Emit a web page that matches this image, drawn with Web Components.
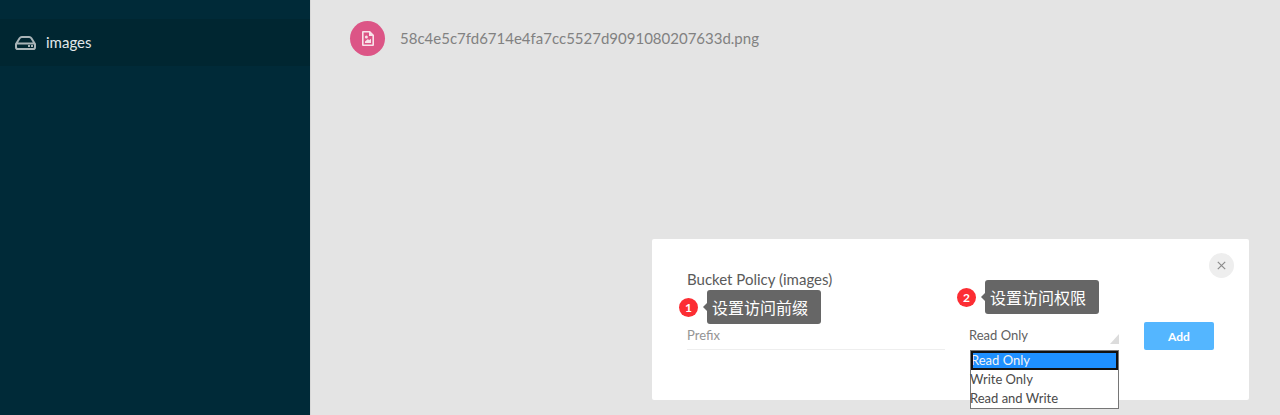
<!DOCTYPE html>
<html>
<head>
<meta charset="utf-8">
<title>Bucket Policy</title>
<style>
  html, body { margin: 0; height: 415px; overflow: hidden; }
  body { font-family: Lato, "Noto Sans CJK SC", sans-serif; }
  #app { display: flex; height: 415px; }
</style>
</head>
<body>
<div id="app">
  <side-bar>
    <bucket-item>images</bucket-item>
  </side-bar>
  <main-pane>
    <file-row>58c4e5c7fd6714e4fa7cc5527d9091080207633d.png</file-row>
    <policy-dialog slot="dialog" bucket="images"></policy-dialog>
  </main-pane>
</div>

<script>
function define(name, html) {
  customElements.define(name, class extends HTMLElement {
    constructor() {
      super();
      this.attachShadow({ mode: "open" }).innerHTML = html;
    }
  });
}

define("side-bar", `
  <style>
    :host { display: block; flex: 0 0 310px; background: #002a38; padding-top: 19px; box-sizing: border-box; }
  </style>
  <slot></slot>
`);

define("bucket-item", `
  <style>
    :host { display: flex; align-items: center; height: 47px; padding-left: 15px; gap: 10px; background: #002631;
      color: #e2e8ea; font: 400 15px Lato, sans-serif; }
    svg { display: block; }
    .label { margin-top: -2px; }
  </style>
  <svg width="21" height="14" viewBox="0 0 21 14" fill="none">
    <path d="M1 8 L4.6 2.2 Q5.4 1 6.8 1 H14.2 Q15.6 1 16.4 2.2 L20 8 V11.2 Q20 13 18.2 13 H2.8 Q1 13 1 11.2 Z M1.4 7.4 H19.6" stroke="#a9b4b8" stroke-width="2" stroke-linejoin="round"/>
    <rect x="13" y="9" width="2" height="2" fill="#a9b4b8"/>
    <rect x="16" y="9" width="2" height="2" fill="#a9b4b8"/>
  </svg>
  <span class="label"><slot></slot></span>
`);

define("main-pane", `
  <style>
    :host { display: flex; flex-direction: column; flex: 1; background: #e4e4e4; border-left: 1px solid #d8d8d8; box-sizing: border-box; }
    .list { flex: 1; padding: 21px 0 0 39px; }
    .foot { display: flex; justify-content: flex-end; padding: 0 31px 15px 0; }
  </style>
  <div class="list"><slot></slot></div>
  <div class="foot"><slot name="dialog"></slot></div>
`);

define("file-row", `
  <style>
    :host { display: flex; align-items: center; gap: 15px; color: #818181; font: 400 15px Lato, sans-serif; }
    .ico { width: 35px; height: 35px; border-radius: 50%; background: #dc5586; display: flex; align-items: center; justify-content: center; }
    .name { margin-top: -2px; }
    svg { display: block; }
  </style>
  <span class="ico">
    <svg width="12" height="15" viewBox="0 0 12 15">
      <path fill-rule="evenodd" fill="#f8e3ea" d="M1 0 H8 L12 4 V14 Q12 15 11 15 H1 Q0 15 0 14 V1 Q0 0 1 0 Z M1.6 1.6 V13.4 H10.4 V5 H7 V1.6 Z"/>
      <path fill="#f8e3ea" d="M3 12 V10.4 L6 8 L7 9.2 L9 7.8 V12 Z"/>
      <circle cx="4.4" cy="6" r="1.5" fill="#f8e3ea"/>
    </svg>
  </span>
  <span class="name"><slot></slot></span>
`);

define("hint-tip", `
  <style>
    :host { display: flex; align-items: center; position: absolute; color: #fff; font: 400 16px "Noto Sans CJK SC", sans-serif; }
    .num { width: 19px; height: 19px; border-radius: 50%; background: #fc2d33; font: 700 12px Lato, sans-serif; display: flex; align-items: center; justify-content: center; margin-right: 9px; }
    .box { position: relative; background: #666; border-radius: 3px; height: 34px; line-height: 34px; padding: 0 13px 0 5px; white-space: nowrap; }
    .box::before { content: ""; position: absolute; left: -4px; top: 13px; border: 4px solid transparent; border-left: 0; border-right-color: #666; }
  </style>
  <span class="num"><slot name="n"></slot></span>
  <span class="box"><slot></slot></span>
`);

define("policy-dialog", `
  <style>
    :host { display: block; position: relative; box-sizing: border-box; width: 597px; height: 161px; background: #fff; border-radius: 2px; padding: 32px 35px 0; color: #555; font: 400 14px Lato, sans-serif; }
    h4 { margin: 0; font: 400 15px/17px Lato, sans-serif; color: #5a5a5a; }
    .form { display: flex; align-items: flex-start; margin-top: 38px; }
    .prefix { width: 258px; height: 24px; box-sizing: border-box; border-bottom: 1px solid #eee; color: #949494; font-size: 13px; line-height: 19px; }
    .pick { position: relative; width: 150px; height: 25px; margin-left: 24px; color: #606060; font-size: 13px; line-height: 19px; }
    .arrow { position: absolute; right: 0; top: 8px; width: 0; height: 0; border-style: solid; border-width: 0 0 10px 9px; border-color: transparent transparent #dcdcdc transparent; }
    .menu { position: absolute; left: 1px; top: 24px; width: 149px; box-sizing: border-box; border: 1px solid #767676; background: #fff; color: #4a4a4a; font-size: 13px; line-height: 19px; }
    .menu div { height: 19px; text-indent: -1px; }
    .menu .sel { box-sizing: border-box; background: #1e90ff; color: #f4f4f4; outline: 2px solid #111; outline-offset: -2px; text-indent: 0; }
    .add { margin-left: 25px; margin-top: -4px; width: 70px; height: 28px; border: 0; border-radius: 2px; padding: 0; background: #54b6ff; color: #fff; font: 700 12px Lato, sans-serif; }
    .close { position: absolute; top: 14px; right: 15px; width: 25px; height: 25px; border-radius: 50%; background: #eee; display: flex; align-items: center; justify-content: center; }
    svg { display: block; }
    .t1 { left: 27px; top: 51px; }
    .t2 { left: 305px; top: 41px; }
  </style>
  <h4>Bucket Policy (<span id="b"></span>)</h4>
  <div class="form">
    <div class="prefix">Prefix</div>
    <div class="pick">Read Only<span class="arrow"></span>
      <div class="menu">
        <div class="sel">Read Only</div>
        <div>Write Only</div>
        <div>Read and Write</div>
      </div>
    </div>
    <button class="add">Add</button>
  </div>
  <span class="close">
    <svg width="9" height="9" viewBox="0 0 9 9"><path d="M.8 .8 L8.2 8.2 M8.2 .8 L.8 8.2" stroke="#8b8b8b" stroke-width="1.2"/></svg>
  </span>
  <hint-tip class="t1"><span slot="n">1</span>设置访问前缀</hint-tip>
  <hint-tip class="t2"><span slot="n">2</span>设置访问权限</hint-tip>
`);

customElements.whenDefined("policy-dialog").then(function () {
  document.querySelectorAll("policy-dialog").forEach(function (d) {
    d.shadowRoot.getElementById("b").textContent = d.getAttribute("bucket");
  });
});
</script>
</body>
</html>
